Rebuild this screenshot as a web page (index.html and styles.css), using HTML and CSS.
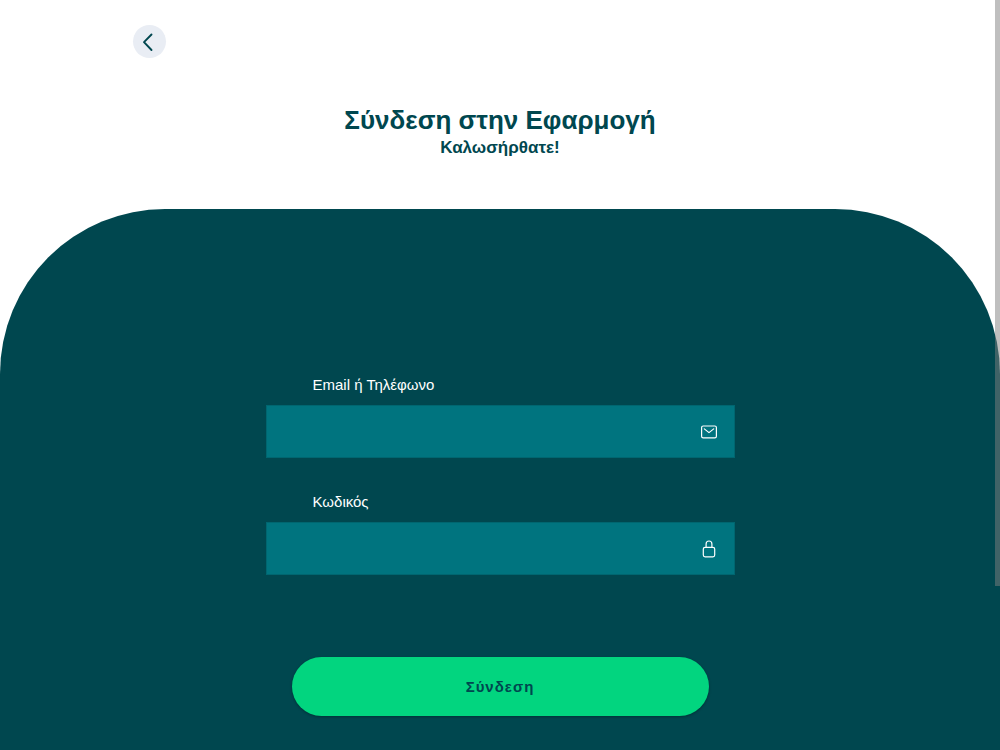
FILE: index.html
```html
<!DOCTYPE html>
<html lang="el">
<head>
    <meta charset="UTF-8">
    <meta name="viewport" content="width=device-width, initial-scale=1.0">
    <title>Σύνδεση</title>
    <link rel="stylesheet" href="styles.css">
</head>
<body>
    <header class="toolbar">
        <button type="button" class="back-btn" aria-label="Πίσω">
            <svg width="33" height="33" viewBox="0 0 33 33" fill="none" stroke="#00474f" stroke-width="1.9" stroke-linecap="round" stroke-linejoin="round">
                <path d="M18.5 9.5L11 17.2L18.5 25"/>
            </svg>
        </button>
    </header>

    <div class="heading">
        <h1>Σύνδεση στην Εφαρμογή</h1>
        <h2>Καλωσήρθατε!</h2>
    </div>

    <main class="panel">
        <form class="login-form">
            <div class="form-group">
                <label for="email">Email ή Τηλέφωνο</label>
                <div class="input-box">
                    <input type="text" id="email" name="email">
                    <svg class="input-icon" width="18" height="18" viewBox="0 0 18 18" fill="none" stroke="#fff" stroke-width="1.2" stroke-linecap="round" stroke-linejoin="round">
                        <rect x="1.6" y="3" width="14.8" height="11.8" rx="1.6"/>
                        <path d="M4.3 5.9L9 9.6L13.7 5.9"/>
                    </svg>
                </div>
            </div>

            <div class="form-group">
                <label for="password">Κωδικός</label>
                <div class="input-box">
                    <input type="password" id="password" name="password">
                    <svg class="input-icon" width="18" height="18" viewBox="0 0 18 18" fill="none" stroke="#fff" stroke-width="1.2" stroke-linecap="round" stroke-linejoin="round">
                        <path d="M6.1 7.3V3.9a2.9 2.9 0 0 1 5.8 0V7.3"/>
                        <rect x="3.3" y="7.3" width="11.4" height="9.6" rx="1.8"/>
                    </svg>
                </div>
            </div>

            <button type="submit" class="submit-btn">Σύνδεση</button>
        </form>
    </main>

    <div class="scroll-thumb"></div>
</body>
</html>
```
FILE: styles.css
```css
* {
    box-sizing: border-box;
}
body {
    display: flex;
    flex-direction: column;
    min-height: 100vh;
    margin: 0;
    font-family: "Liberation Sans", Arial, sans-serif;
    color: #00474f;
    background-color: #fff;
}
.toolbar {
    display: flex;
    padding: 25px 13.3% 0;
}
.back-btn {
    width: 33px;
    height: 33px;
    padding: 0;
    border: none;
    border-radius: 50%;
    background-color: #e9edf4;
    cursor: pointer;
}
.back-btn svg {
    display: block;
}
.heading {
    padding: 46px 20px 49px;
    text-align: center;
}
.heading h1 {
    margin: 0;
    font-size: 26px;
    line-height: 32px;
}
.heading h2 {
    margin: 0;
    font-size: 17px;
    line-height: 24px;
}
.panel {
    flex: 1;
    padding: 164px 20px 34px;
    border-radius: 165px 165px 0 0;
    background-color: #00474f;
}
.login-form {
    display: flex;
    flex-direction: column;
    max-width: 469px;
    margin: 0 auto;
}
.form-group {
    margin-bottom: 32px;
}
.form-group label {
    display: block;
    padding-left: 47px;
    margin-bottom: 8px;
    font-size: 15px;
    line-height: 24px;
    color: #fff;
}
.input-box {
    display: flex;
    align-items: center;
    height: 53px;
    padding-right: 16px;
    border: 1px solid #006670;
    background-color: #00747f;
}
.input-box input {
    flex: 1;
    min-width: 0;
    height: 100%;
    padding: 0 16px 0 47px;
    border: none;
    outline: none;
    font: inherit;
    color: #fff;
    background: transparent;
}
.submit-btn {
    height: 59px;
    margin: 50px 26px 0;
    border: none;
    border-radius: 30px;
    font-family: inherit;
    font-size: 15px;
    font-weight: bold;
    letter-spacing: 1px;
    color: #00474f;
    background-color: #02d57f;
    box-shadow: 0 1px 3px rgba(0,0,0,0.3);
    cursor: pointer;
}
.submit-btn:hover {
    background-color: #02c375;
}
.scroll-thumb {
    position: fixed;
    top: 0;
    right: 0;
    width: 5px;
    height: 78.1vh;
    background-color: rgba(128,128,128,0.5);
}
```
